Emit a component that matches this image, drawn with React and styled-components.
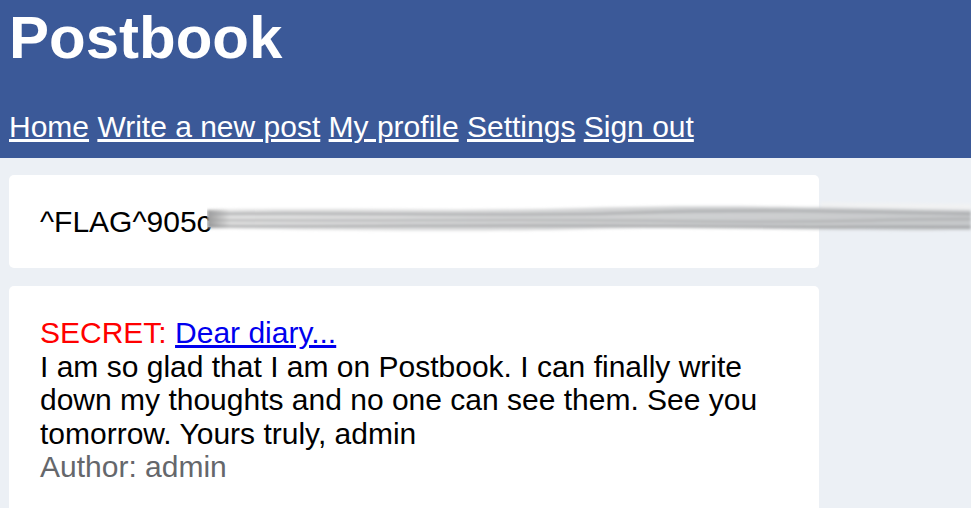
import React from 'react'
import styled, { createGlobalStyle } from 'styled-components'

const GlobalStyle = createGlobalStyle`
    body {
        margin: 0;
        background: #ecf0f5;
        font-family: "Liberation Sans", Arial, sans-serif;
        font-size: 30px;
        line-height: 33.5px;
        color: #000;
    }
`

function App() {
    return (
        <Page>
            <GlobalStyle />
            <Header>
                <Title>Postbook</Title>
                <Nav>
                    <NavLink href="#">Home</NavLink>{' '}
                    <NavLink href="#">Write a new post</NavLink>{' '}
                    <NavLink href="#">My profile</NavLink>{' '}
                    <NavLink href="#">Settings</NavLink>{' '}
                    <NavLink href="#">Sign out</NavLink>
                </Nav>
            </Header>
            <Main>
                <Card>^FLAG^905c</Card>
                <Card>
                    <div>
                        <Secret>SECRET:</Secret> <PostLink href="#">Dear diary...</PostLink>
                    </div>
                    <div>
                        I am so glad that I am on Postbook. I can finally write down my thoughts and no one can see them. See you tomorrow. Yours truly, admin
                    </div>
                    <Author>Author: admin</Author>
                </Card>
            </Main>
            <Smear viewBox="0 0 766 44" preserveAspectRatio="none">
                <defs>
                    <filter id="blur" x="-5%" y="-50%" width="110%" height="200%">
                        <feGaussianBlur stdDeviation="1.8" />
                    </filter>
                    <linearGradient id="fade" x1="0" x2="1" y1="0" y2="0">
                        <stop offset="0" stopColor="#9a9a9a" />
                        <stop offset="0.03" stopColor="#e2e2e2" />
                        <stop offset="0.5" stopColor="#d2d3d4" />
                        <stop offset="1" stopColor="#c6c8ca" />
                    </linearGradient>
                </defs>
                <g filter="url(#blur)">
                    <path d="M615 6 L766 8 L766 18 L615 16 Z" fill="#f1f2f3" />
                    <path d="M0 14 C120 11 240 16 380 12 S620 12 766 14 L766 34 C620 35 480 30 380 33 S120 34 0 32 Z" fill="url(#fade)" />
                    <path d="M0 18 C150 16 300 21 420 17 S640 15 766 18" stroke="#a0a2a4" strokeWidth="2" fill="none" />
                    <path d="M0 24 C160 26 300 22 460 25 S660 23 766 23" stroke="#9c9ea0" strokeWidth="2" fill="none" opacity="0.7" />
                    <path d="M0 30 C160 31 300 28 460 30 S660 30 766 31" stroke="#8e9092" strokeWidth="2" fill="none" opacity="0.8" />
                </g>
            </Smear>
        </Page>
    )
}

const Page = styled.div`
    position: relative;
    height: 508px;
    overflow: hidden;
`

const Header = styled.header`
    background: #3b5998;
    color: #fff;
    padding: 3px 9px 14px;
`

const Title = styled.h1`
    margin: 0 0 38px;
    font-size: 60px;
    font-weight: bold;
    line-height: 69px;
`

const Nav = styled.nav`
    line-height: 33.5px;
`

const NavLink = styled.a`
    color: #fff;
    text-decoration: underline;
`

const Main = styled.main`
    display: flex;
    flex-direction: column;
    gap: 18px;
    padding: 17px 9px;
`

const Card = styled.div`
    width: 810px;
    box-sizing: border-box;
    background: #fff;
    border-radius: 5px;
    padding: 30px 31px;
`

const Secret = styled.span`
    color: #ff0000;
`

const PostLink = styled.a`
    color: #0000ee;
    text-decoration: underline;
`

const Author = styled.div`
    color: #65676b;
`

const Smear = styled.svg`
    position: absolute;
    left: 207px;
    top: 196px;
    width: 764px;
    height: 44px;
    pointer-events: none;
`

export default App
